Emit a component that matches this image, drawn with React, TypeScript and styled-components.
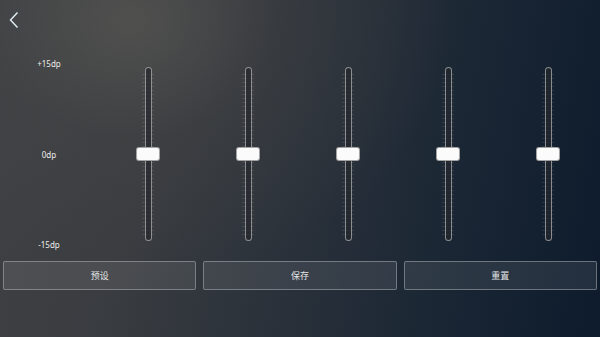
import * as React from 'react';
import styled, { createGlobalStyle } from 'styled-components';

const GlobalStyle = createGlobalStyle`
	html, body {
		margin: 0;
		padding: 0;
		background: #1a2430;
	}
	* {
		box-sizing: border-box;
	}
`;

const Screen = styled.div`
	width: 600px;
	height: 337px;
	overflow: hidden;
	display: flex;
	flex-direction: column;
	font-family: 'Noto Sans', 'Noto Sans CJK SC', sans-serif;
	color: #e6e6e6;
	background:
		radial-gradient(ellipse 320px 260px at 130px 20px, rgba(82, 82, 80, 0.9) 0%, rgba(70, 70, 70, 0.4) 45%, rgba(60, 60, 60, 0) 100%),
		linear-gradient(100deg, #3f4144 0%, #393c40 25%, #2a313a 50%, #1a2634 75%, #0d1b2c 100%);
`;

const TopBar = styled.div`
	height: 40px;
	padding: 11px 0 0 9px;
`;

const BackButton = styled.button`
	width: 12px;
	height: 18px;
	padding: 0;
	border: 0;
	background: none;
	cursor: pointer;
	display: block;
`;

const Equalizer = styled.div`
	display: grid;
	grid-template-columns: 98px repeat(5, 100px);
	height: 212px;
	padding-top: 19px;
`;

const Scale = styled.div`
	display: flex;
	flex-direction: column;
	justify-content: space-between;
	align-items: center;
	font-size: 8px;
	line-height: 10px;
	height: 191px;
	color: #ededed;
`;

const BandColumn = styled.div`
	display: flex;
	justify-content: center;
	padding-top: 8px;
`;

const Band = styled.div`
	position: relative;
	width: 12px;
	height: 174px;
	display: flex;
	justify-content: center;
	background: repeating-linear-gradient(
		to bottom,
		transparent 0px,
		transparent 3px,
		rgba(255, 255, 255, 0.09) 3px,
		rgba(255, 255, 255, 0.09) 4px
	);
	background-position: 0 4px;
	background-size: 100% 166px;
	background-repeat: no-repeat;
`;

const Track = styled.div`
	width: 7px;
	height: 100%;
	border: 1px solid rgba(205, 205, 205, 0.62);
	border-radius: 4px;
	background: rgba(35, 38, 44, 0.7);
`;

const Thumb = styled.div<{ $pos: number }>`
	position: absolute;
	left: 50%;
	width: 24px;
	height: 14px;
	margin-left: -12px;
	margin-top: -7px;
	background: #fbfbfb;
	border: 1px solid rgba(0, 0, 0, 0.35);
	border-radius: 3px;
	top: ${p => p.$pos}%;
`;

const ButtonRow = styled.div`
	display: grid;
	grid-template-columns: repeat(3, 1fr);
	gap: 7px;
	padding: 9px 3px 0 3px;
`;

const ActionButton = styled.button`
	height: 29px;
	border: 1px solid rgba(190, 195, 200, 0.45);
	border-radius: 2px;
	background: rgba(255, 255, 255, 0.085);
	color: #e4e4e4;
	font-family: 'Noto Sans CJK SC', sans-serif;
	font-size: 9px;
	cursor: pointer;
`;

const bands = [50, 50, 50, 50, 50];

export default function App() {
	return (
		<>
			<GlobalStyle />
			<Screen>
				<TopBar>
					<BackButton aria-label="back">
						<svg width="12" height="18" viewBox="0 0 12 18">
							<path d="M8.5 1.5 L1.5 9 L8.5 16.5" fill="none" stroke="#e3f0f6" strokeWidth="1.4" />
						</svg>
					</BackButton>
				</TopBar>

				<Equalizer>
					<Scale>
						<span>+15dp</span>
						<span>0dp</span>
						<span>-15dp</span>
					</Scale>
					{bands.map((pos, i) => (
						<BandColumn key={i}>
							<Band>
								<Track />
								<Thumb $pos={pos} />
							</Band>
						</BandColumn>
					))}
				</Equalizer>

				<ButtonRow>
					<ActionButton>预设</ActionButton>
					<ActionButton>保存</ActionButton>
					<ActionButton>重置</ActionButton>
				</ButtonRow>
			</Screen>
		</>
	);
}
